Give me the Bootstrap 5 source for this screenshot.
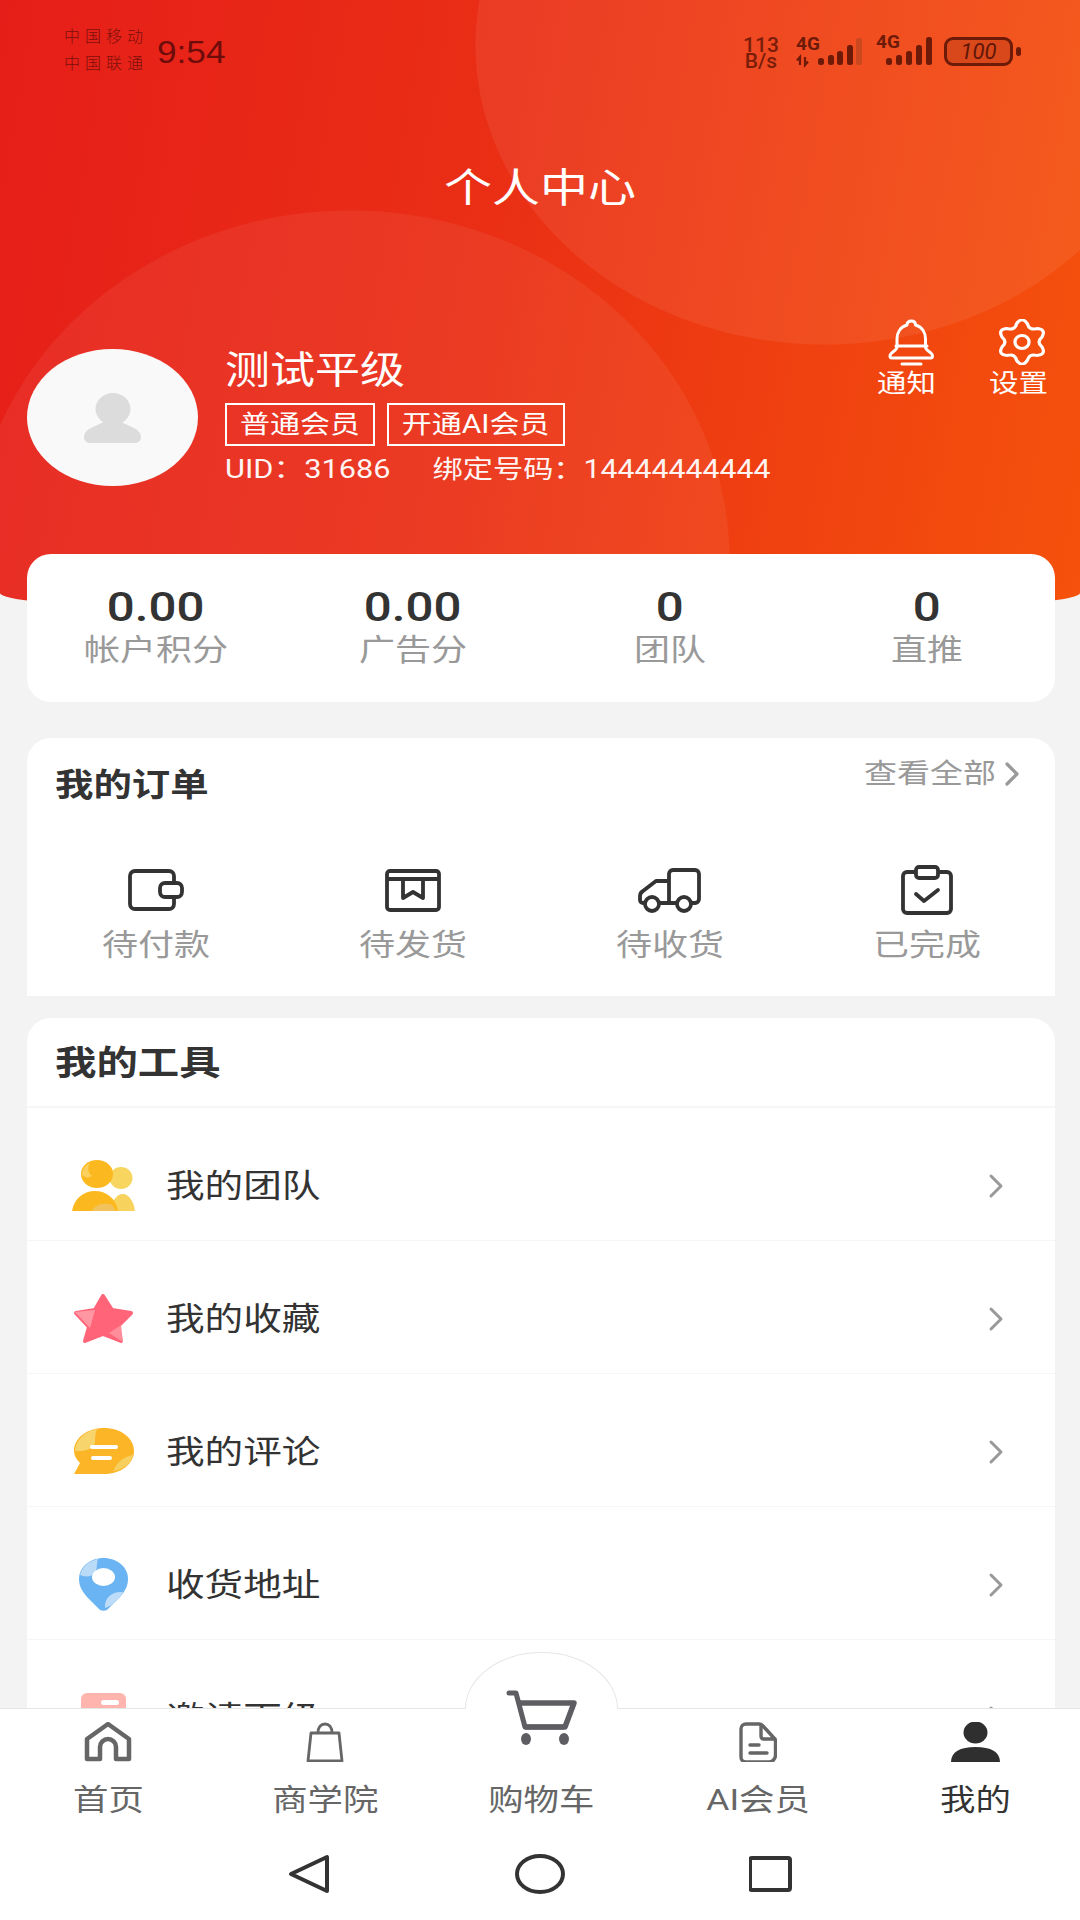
<!DOCTYPE html>
<html lang="zh-CN">
<head>
<meta charset="utf-8">
<title>个人中心</title>
<link href="https://cdn.jsdelivr.net/npm/bootstrap@5.3.0/dist/css/bootstrap.min.css" rel="stylesheet">
<style>
html,body{margin:0;padding:0;background:#f3f3f3}
body{font-family:Roboto,"Noto Sans CJK SC",sans-serif;color:#333}
.app{width:1080px;height:1920px;overflow:hidden;display:flex;flex-direction:column}
.scroller{height:1708px;flex:none;overflow:hidden}
.sx{display:inline-block;transform:scaleX(1.2);white-space:nowrap}
.sxl{display:inline-block;transform:scaleX(1.2);transform-origin:left center;white-space:nowrap}
.hero{height:617px;color:#fff;border-radius:0 0 50% 50%/0 0 24px 24px;
 background:
 radial-gradient(350px 300px at 825px 45px,rgba(255,255,255,.065) 99.7%,transparent 100%),
 radial-gradient(380px 350px at 350px 560px,rgba(255,255,255,.06) 99.7%,transparent 100%),
 linear-gradient(100deg,#e61e19 0%,#ea2f15 45%,#f5520c 100%);}
.stat-bar{height:165px;padding:22px 59px 0 64px}
.carrier{font-size:16px;line-height:27px;letter-spacing:5px;color:#7e0f0c;width:93px;font-family:"Noto Sans CJK SC",sans-serif;font-weight:300}
.clock{font-family:"Liberation Sans",sans-serif;font-size:32px;line-height:36px;margin-top:12px;transform:scaleX(1.1);transform-origin:left center;color:#6e0c0c}
.speed{font-size:21px;line-height:16px;font-weight:500;text-align:center;width:38px;margin:15px 16px 0 auto;color:#7a1c0a}
.sig{margin-top:10px;flex:none}
.sig-b{margin-top:8px;margin-left:14px;flex:none}
.batt{width:69px;height:29px;border:3px solid #6e1a08;border-radius:9px;background:#d9481a;font-size:22px;font-style:italic;line-height:23px;text-align:center;color:#5e1608;margin:15px 0 0 10px}
.batt-nub{width:5px;height:9px;border-radius:3px;background:#6e1a08;margin:25px 0 0 3px}
.hero-title{height:48px;line-height:48px;font-size:40px;text-align:center;margin-bottom:104px}
.avatar{width:171px;height:137px;border-radius:50%;background:#f9f9f9;margin-top:32px;flex:none}
.profile{padding-left:27px}
.who{margin:31px 0 0 27px}
.nick{font-size:37.5px;line-height:44px;height:44px}
.tags{gap:12px;margin-top:11px}
.tag-box{height:43px;border:2px solid #fff;font-size:25px;line-height:39px;display:flex;justify-content:center}
.tag-a{width:150px}.tag-b{width:178px}
.uidline{font-size:25.6px;line-height:30px;height:30px;margin-top:8px;opacity:.95}
.uid-gap{width:35px}
.uid-phone{font-size:25.2px}
.quick{margin-left:auto;padding-right:33px;gap:54px}
.quick-item{width:58px;font-size:24.5px;line-height:24px;text-align:center}
.quick-icon{height:47px;margin-bottom:6px;padding-top:2px;display:flex;justify-content:center;box-sizing:content-box}
.bell-svg{margin-left:10px}
.gear-svg{margin-left:8px;flex:none}
.shell{margin:0 25px 0 27px;border:0;background:#fff;overflow:hidden}
.shell-stats{margin-top:-63px;height:148px;border-radius:24px;padding-top:30px}
.num{font-size:41px;line-height:46px;font-weight:500;color:#333}
.cap{font-size:30px;line-height:40px;color:#999}
.shell-orders{margin-top:36px;height:258px;border-radius:24px 24px 0 0}
.orders-head{height:127px;padding:0 36px 0 28px}
.h-title{font-size:32px;font-weight:700;line-height:40px;margin-top:27px;color:#333}
.more{font-size:27.5px;line-height:36px;color:#999;margin-top:18px;padding-right:24px}
.more-chev{margin:0 -24px 0 20px}
.order-icon{height:50px;display:flex;align-items:center;justify-content:center}
.order-cap{font-size:30px;line-height:40px;color:#999;margin-top:10px}
.shell-tools{margin-top:22px;border-radius:24px 24px 0 0}
.tools-head{height:90px;padding:25px 0 0 28px;border-bottom:2px solid #f6f6f6}
.t-title{font-size:34.5px;font-weight:700;line-height:40px}
.tool-row{height:133px;padding:53px 51px 30px 45px!important;border:0;border-bottom:2px solid #f6f6f6;display:flex;align-items:center;background:#fff;border-radius:0!important}
.tool-icon{width:63px;height:54px;margin-right:31px;display:flex;align-items:center;justify-content:center;flex:none}
.tool-label{font-size:32.2px;line-height:50px;color:#333}
.tabbar{flex:none;height:212px;background:#fff;border-top:1px solid #e6e6e6;position:relative}
.bump{position:absolute;left:465px;top:-57px;width:153px;height:57px;background:#fff;border:1px solid #e6e6e6;border-bottom:0;border-radius:50% 50% 0 0/100% 100% 0 0}
.tab-cell{width:216.7px;flex:none;text-align:center;padding-top:13px;position:relative;color:#666}
.tab-icon{height:40px;display:flex;justify-content:center}
.tab-cap{font-size:29.5px;line-height:40px;margin-top:18px}
.tab-on{color:#333}
.cart-svg{margin-top:-32px;flex:none}
.sysnav{margin-top:34px}
.sys-cell{width:231px;height:40px;display:flex;align-items:center;justify-content:center}
</style>
</head>
<body>
<div class="app">
 <div class="scroller">
  <header class="hero">
   <div class="stat-bar d-flex align-items-start">
    <div class="carrier">中国移动<br>中国联通</div>
    <div class="clock">9:54</div>
    <div class="speed">113<br>B/s</div>
    <svg class="sig" width="66" height="36" viewBox="0 0 66 36">
     <text x="0" y="18" font-family="Roboto" font-weight="700" font-size="19" fill="#6e1a08">4G</text>
     <path d="M4 33V25l-3 3.500M9 25v8l3-3.500" stroke="#6e1a08" stroke-width="2.200" fill="none"/>
     <g fill="#6e1a08"><rect x="22" y="26" width="6" height="7" rx="2.500"/><rect x="32" y="23" width="6" height="10" rx="2.500"/><rect x="41" y="19" width="6" height="14" rx="2.500"/><rect x="51" y="13" width="6" height="20" rx="2.500"/></g>
     <rect x="60" y="6" width="6" height="27" rx="2.500" fill="#c9481e"/>
    </svg>
    <svg class="sig-b" width="58" height="38" viewBox="0 0 58 38">
     <text x="0" y="18" font-family="Roboto" font-weight="700" font-size="19" fill="#6e1a08">4G</text>
     <g fill="#6e1a08"><rect x="10" y="28" width="6" height="7" rx="2.500"/><rect x="20" y="25" width="6" height="10" rx="2.500"/><rect x="30" y="21" width="6" height="14" rx="2.500"/><rect x="40" y="15" width="6" height="20" rx="2.500"/><rect x="50" y="7" width="6" height="28" rx="2.500"/></g>
    </svg>
    <div class="batt">100</div>
    <div class="batt-nub"></div>
   </div>
   <div class="hero-title"><span class="sx">个人中心</span></div>
   <div class="profile d-flex align-items-start">
    <div class="avatar d-flex align-items-center justify-content-center">
     <svg width="57" height="50" viewBox="0 0 57 50"><ellipse cx="29" cy="16" rx="17.500" ry="16" fill="#dcdcdc"/><path d="M19 29c-5 4-19 6-19 15 0 4 3 6 7 6h43c4 0 7-2 7-6 0-9-14-11-19-15-3 3-16 3-19 0z" fill="#dcdcdc"/></svg>
    </div>
    <div class="who">
     <div class="nick"><span class="sxl">测试平级</span></div>
     <div class="tags d-flex">
      <div class="tag-box tag-a"><span class="sx">普通会员</span></div>
      <div class="tag-box tag-b"><span class="sx">开通AI会员</span></div>
     </div>
     <div class="uidline"><span class="sxl">UID：31686<span class="d-inline-block uid-gap"></span><span class="uid-phone">绑定号码：14444444444</span></span></div>
    </div>
    <div class="quick d-flex">
     <div class="quick-item">
      <div class="quick-icon"><svg class="bell-svg" width="47" height="47" viewBox="0 0 47 47" fill="none" stroke="#fff" stroke-width="3" stroke-linecap="round" stroke-linejoin="round"><path d="M23.500 2c3 0 4 2 4 4 7 2 10 8 10 14v8c0 4 7 5 7 9 0 1.500-1 2-2 2H4c-1 0-2-.5-2-2 0-4 7-5 7-9v-8c0-6 3-12 10-14 0-2 1-4 4.500-4z"/><path d="M8 27h31M14 45h19"/></svg></div>
      <span class="sx">通知</span>
     </div>
     <div class="quick-item">
      <div class="quick-icon"><svg class="gear-svg" width="50" height="46" viewBox="-23 -23 46 46" preserveAspectRatio="none" fill="none" stroke="#fff" stroke-width="3" stroke-linejoin="round"><path d="M-4.920-18.350Q0-26 4.920-18.350 6.500-11.260 13.440-13.440 22.500-13 18.350-4.920 13 0 18.350 4.920 22.500 13 13.440 13.440 6.500 11.260 4.920 18.350 0 26-4.920 18.350-6.500 11.260-13.440 13.440-22.500 13-18.350 4.920-13 0-18.350-4.920-22.500-13-13.440-13.440-6.500-11.260-4.920-18.350Z"/><circle r="6.500"/></svg></div>
      <span class="sx">设置</span>
     </div>
    </div>
   </div>
  </header>

  <section class="card shell shell-stats">
   <div class="row g-0 text-center">
    <div class="col-3"><div class="num"><span class="sx">0.00</span></div><div class="cap"><span class="sx">帐户积分</span></div></div>
    <div class="col-3"><div class="num"><span class="sx">0.00</span></div><div class="cap"><span class="sx">广告分</span></div></div>
    <div class="col-3"><div class="num"><span class="sx">0</span></div><div class="cap"><span class="sx">团队</span></div></div>
    <div class="col-3"><div class="num"><span class="sx">0</span></div><div class="cap"><span class="sx">直推</span></div></div>
   </div>
  </section>

  <section class="card shell shell-orders">
   <div class="orders-head d-flex justify-content-between align-items-start">
    <div class="h-title"><span class="sxl">我的订单</span></div>
    <div class="more d-flex align-items-center"><span class="sx">查看全部</span><svg class="more-chev" width="14" height="24" viewBox="0 0 14 24" fill="none" stroke="#999" stroke-width="3.200" stroke-linecap="round" stroke-linejoin="round"><path d="M2 2l10 10L2 22"/></svg></div>
   </div>
   <div class="row g-0 text-center">
    <div class="col-3"><div class="order-icon"><svg width="56" height="42" viewBox="0 0 56 42" fill="none" stroke="#333" stroke-width="3.800"><path d="M46 14V7a5 5 0 0 0-5-5H7a5 5 0 0 0-5 5v28a5 5 0 0 0 5 5h34a5 5 0 0 0 5-5v-7"/><rect x="32" y="14" width="22" height="14" rx="5"/></svg></div><div class="order-cap"><span class="sx">待付款</span></div></div>
    <div class="col-3"><div class="order-icon"><svg width="56" height="43" viewBox="0 0 56 43" fill="none" stroke="#333" stroke-width="3.800" stroke-linejoin="round"><rect x="2" y="2" width="52" height="39" rx="3"/><path d="M2 10h52M18 10v19l10-6 10 6V10"/></svg></div><div class="order-cap"><span class="sx">待发货</span></div></div>
    <div class="col-3"><div class="order-icon"><svg width="63" height="45" viewBox="0 0 63 45" fill="none" stroke="#333" stroke-width="3.800" stroke-linejoin="round"><path d="M31 35V6a4 4 0 0 1 4-4h22a4 4 0 0 1 4 4v25a4 4 0 0 1-4 4h-3M38 35H22M31 13H18L5 23a6 6 0 0 0-3 5v4a3 3 0 0 0 3 3h1"/><circle cx="14" cy="36" r="7"/><circle cx="46" cy="36" r="7"/></svg></div><div class="order-cap"><span class="sx">待收货</span></div></div>
    <div class="col-3"><div class="order-icon"><svg width="52" height="50" viewBox="0 0 52 50" fill="none" stroke="#333" stroke-width="3.800" stroke-linejoin="round" stroke-linecap="round"><rect x="2" y="7" width="48" height="41" rx="4"/><rect x="15" y="2" width="22" height="11" rx="3" fill="#fff"/><path d="M15 29l8 7 14-11"/></svg></div><div class="order-cap"><span class="sx">已完成</span></div></div>
   </div>
  </section>

  <section class="card shell shell-tools">
   <div class="tools-head"><div class="t-title"><span class="sxl">我的工具</span></div></div>
   <div class="list-group list-group-flush">
    <div class="list-group-item tool-row">
     <div class="tool-icon"><svg width="63" height="51" viewBox="0 0 63 51"><ellipse cx="49" cy="18" rx="11.500" ry="11" fill="#f8d55f"/><path d="M38 51C40 40 45 34 51 34S62 42 63 51z" fill="#f7d25c"/><ellipse cx="25" cy="14" rx="16" ry="14" fill="#fbb81f"/><path d="M0 51C2 38 12 31 23 31S44 38 46 51z" fill="#fbb81f"/><path d="M20 51c2-6 12-9 20-6l4 6z" fill="#f2c25c"/><path d="M10 15c0-6 4-10 8-12-3 5-2 10 2 13-3 2-7 2-10-1z" fill="#fbd05e"/></svg></div>
     <div class="tool-label flex-grow-1"><span class="sxl">我的团队</span></div>
     <svg width="16" height="26" viewBox="0 0 16 26" fill="none" stroke="#999" stroke-width="3" stroke-linecap="round" stroke-linejoin="round"><path d="M3 3l10 10L3 23"/></svg>
    </div>
    <div class="list-group-item tool-row">
     <div class="tool-icon"><svg width="61" height="51" viewBox="0 0 61 51"><path d="M30 3l9 14 19 3-14 14 4 14-18-7-18 7 4-14L3 20l19-3z" fill="#ff6479" stroke="#ff6479" stroke-width="4" stroke-linejoin="round"/><path d="M2 19l20-2-5 18z" fill="#ff97a3"/><path d="M36 40l12-8 2 17z" fill="#ff8d9a"/></svg></div>
     <div class="tool-label flex-grow-1"><span class="sxl">我的收藏</span></div>
     <svg width="16" height="26" viewBox="0 0 16 26" fill="none" stroke="#999" stroke-width="3" stroke-linecap="round" stroke-linejoin="round"><path d="M3 3l10 10L3 23"/></svg>
    </div>
    <div class="list-group-item tool-row">
     <div class="tool-icon"><svg width="61" height="50" viewBox="0 0 61 50"><path d="M31 1c17 0 30 10 30 23S48 47 31 47H1l6-11C3 32 1 28 1 24 1 11 14 1 31 1z" fill="#fcb526"/><path d="M2 24C3 12 14 3 24 2c-3 8-1 12-3 16-4 6-12 6-19 6z" fill="#f8d46d"/><path d="M40 44c3-6 8-14 20-16-2 9-10 15-20 16z" fill="#f6cf5e"/><path d="M19 20h24M20 31h17" stroke="#fff" stroke-width="4" stroke-linecap="round"/></svg></div>
     <div class="tool-label flex-grow-1"><span class="sxl">我的评论</span></div>
     <svg width="16" height="26" viewBox="0 0 16 26" fill="none" stroke="#999" stroke-width="3" stroke-linecap="round" stroke-linejoin="round"><path d="M3 3l10 10L3 23"/></svg>
    </div>
    <div class="list-group-item tool-row">
     <div class="tool-icon"><svg width="49" height="53" viewBox="0 0 49 53"><path d="M24.500 0C38 0 49 9 49 21c0 7-3 12-8 18L28 52c-2 1-5 1-7 0L8 39C3 33 0 28 0 21 0 9 11 0 24.500 0z" fill="#6bb4f3"/><path d="M1 17C3 9 9 3 19 1c-2 6 0 11-4 15-4 3-9 3-14 1z" fill="#b9dbf7"/><path d="M26 50c-1-9 6-17 18-16-4 7-9 13-18 16z" fill="#bcdcf7"/><ellipse cx="24.500" cy="19" rx="11.500" ry="9" fill="#fff"/></svg></div>
     <div class="tool-label flex-grow-1"><span class="sxl">收货地址</span></div>
     <svg width="16" height="26" viewBox="0 0 16 26" fill="none" stroke="#999" stroke-width="3" stroke-linecap="round" stroke-linejoin="round"><path d="M3 3l10 10L3 23"/></svg>
    </div>
    <div class="list-group-item tool-row">
     <div class="tool-icon"><svg width="45" height="50" viewBox="0 0 45 50"><rect width="45" height="50" rx="6" fill="#ffb4ad"/><rect x="20" y="7" width="18" height="5" rx="2.500" fill="#fff"/></svg></div>
     <div class="tool-label flex-grow-1"><span class="sxl">邀请下级</span></div>
     <svg width="16" height="26" viewBox="0 0 16 26" fill="none" stroke="#999" stroke-width="3" stroke-linecap="round" stroke-linejoin="round"><path d="M3 3l10 10L3 23"/></svg>
    </div>
   </div>
  </section>
 </div>

 <nav class="tabbar">
  <div class="bump"></div>
  <div class="d-flex">
   <div class="tab-cell"><div class="tab-icon"><svg width="48" height="40" viewBox="0 0 48 40" fill="none" stroke="#666" stroke-width="4.500" stroke-linejoin="round"><path d="M24 2L3 17v20h13V25a8 8 0 0 1 16 0v12h13V17z"/></svg></div><div class="tab-cap"><span class="sx">首页</span></div></div>
   <div class="tab-cell"><div class="tab-icon"><svg width="38" height="40" viewBox="0 0 38 40" fill="none" stroke="#666" stroke-width="2.800" stroke-linejoin="round"><path d="M5 11h28l3 28H2z"/><path d="M12 11c0-6 3-9 7-9s7 3 7 9"/></svg></div><div class="tab-cap"><span class="sx">商学院</span></div></div>
   <div class="tab-cell"><div class="tab-icon"><svg class="cart-svg" width="71" height="55" viewBox="0 0 71 55" fill="none"><path d="M3 3h7l9 34h38" stroke="#5e5e62" stroke-width="5" stroke-linecap="round" stroke-linejoin="round"/><path d="M13 13h55l-9 24H19" stroke="#5e5e62" stroke-width="5.500" stroke-linejoin="round"/><ellipse cx="20" cy="49" rx="5" ry="6" fill="#5e5e62"/><ellipse cx="58" cy="49" rx="5" ry="6" fill="#5e5e62"/></svg></div><div class="tab-cap"><span class="sx">购物车</span></div></div>
   <div class="tab-cell"><div class="tab-icon"><svg width="38" height="40" viewBox="0 0 38 40" fill="none" stroke="#666" stroke-width="3.400" stroke-linejoin="round"><path d="M7 2h13c2 0 3 1 4 2l11 12c1 1 1.500 2 1.500 3v14c0 4-3 7-7 7H7c-3 0-5-2-5-5V7c0-3 2-5 5-5z"/><path d="M22 3v11c0 2 1 3 3 3h11M11 23h9M11 31h17" stroke-linecap="round"/></svg></div><div class="tab-cap"><span class="sx">AI会员</span></div></div>
   <div class="tab-cell tab-on"><div class="tab-icon"><svg width="49" height="40" viewBox="0 0 49 40" fill="#2f2f2f"><ellipse cx="24.500" cy="10.500" rx="12" ry="11"/><path d="M0 40c0-10 9-15 24.500-15S49 30 49 40z"/></svg></div><div class="tab-cap"><span class="sx">我的</span></div></div>
  </div>
  <div class="sysnav d-flex justify-content-center">
   <div class="sys-cell"><svg width="42" height="40" viewBox="0 0 42 40" fill="none" stroke="#333" stroke-width="4" stroke-linejoin="round"><path d="M39 3v34L3 20z"/></svg></div>
   <div class="sys-cell"><svg width="50" height="40" viewBox="0 0 50 40" fill="none" stroke="#333" stroke-width="4"><ellipse cx="25" cy="20" rx="23" ry="18"/></svg></div>
   <div class="sys-cell"><svg width="44" height="36" viewBox="0 0 44 36" fill="none" stroke="#333" stroke-width="4" stroke-linejoin="round"><rect x="1" y="2" width="40" height="32" rx="2"/></svg></div>
  </div>
 </nav>
</div>
<script src="https://cdn.jsdelivr.net/npm/bootstrap@5.3.0/dist/js/bootstrap.bundle.min.js"></script>
</body>
</html>
